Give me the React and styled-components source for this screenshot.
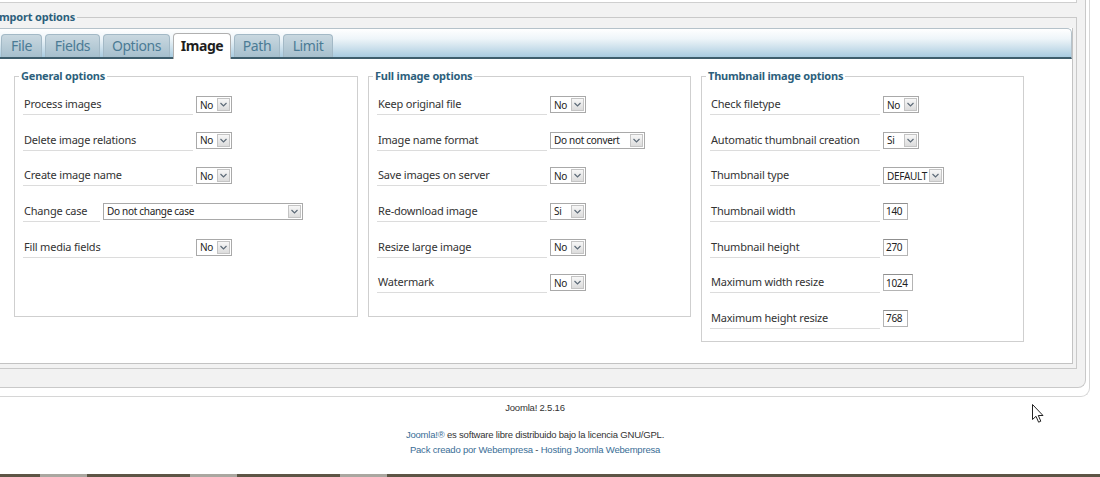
import styled, { createGlobalStyle } from "styled-components";

const GlobalStyle = createGlobalStyle`
  html, body {
    margin: 0;
    padding: 0;
    background: #fff;
    overflow: hidden;
  }
  #root {
    position: relative;
    min-height: 100vh;
    display: flex;
    flex-direction: column;
    font-family: "Noto Sans", "DejaVu Sans", sans-serif;
  }
`

const OuterBox = styled.div`
  box-sizing: border-box;
  width: 1130px;
  margin-left: -40px;
  background: #fff;
  border: 1px solid #d6d6d6;
  border-top: none;
  border-radius: 0 0 9px 0;
  padding: 0 3px 8px 0;
`

const GrayBox = styled.div`
  background: #f2f2f2;
  border: 1px solid #c9c9c9;
  border-top: none;
  border-radius: 0 0 8px 0;
  padding: 0 8px 18px 18px;
`

const TopStrip = styled.div`
  height: 2px;
  background: #fff;
  border: 1px solid #cfcfcf;
  border-top: none;
`

const ImportFieldset = styled.fieldset`
  margin: 7px 0 0;
  padding: 4px 3px 4px 16px;
  border: 1px solid #c9c9c9;
  min-width: 0;
`

const ImportLegend = styled.legend`
  margin-left: -4px;
  padding: 0 2px;
  font-size: 11px;
  font-weight: bold;
  line-height: 14px;
  letter-spacing: -0.2px;
  color: #2d5f7c;
`

const Panel = styled.div`
  background: #fff;
  border: 1px solid #c3c3c3;
  border-top: none;
`

const TabBar = styled.div`
  box-sizing: border-box;
  height: 31px;
  display: flex;
  align-items: flex-end;
  gap: 3px;
  padding-left: 2px;
  border: 1px solid #b5c2ca;
  border-bottom: 2px solid #3e5d6c;
  border-radius: 0 5px 0 0;
  background: linear-gradient(to bottom, #ffffff 0%, #eef5f9 35%, #cfe2ed 65%, #a8cbe0 100%);
`

const Tab = styled.div`
  box-sizing: border-box;
  width: ${p => p.$width}px;
  height: ${p => (p.$active ? "26px" : "23px")};
  margin-bottom: ${p => (p.$active ? "-2px" : "0")};
  line-height: ${p => (p.$active ? "24px" : "22px")};
  text-align: center;
  font-size: 14px;
  letter-spacing: -0.4px;
  font-weight: ${p => (p.$active ? "bold" : "normal")};
  color: ${p => (p.$active ? "#1e1e1e" : "#4b7b95")};
  background: ${p => (p.$active ? "#fff" : "linear-gradient(to bottom, #c9d8e0, #a6bfcd)")};
  border: 1px solid ${p => (p.$active ? "#b0b0b0" : "#a3b9c6")};
  border-bottom: none;
  border-radius: 4px 4px 0 0;
  position: relative;
`

const Body = styled.div`
  display: flex;
  align-items: flex-start;
  gap: 10px;
  padding: 10px 0 21px 16px;
`

const Group = styled.fieldset`
  box-sizing: border-box;
  width: ${p => p.$width}px;
  min-height: ${p => p.$minHeight || 0}px;
  margin: 0;
  padding: 11px 6px 12px 4px;
  border: 1px solid #cfcfcf;
  min-inline-size: 0;
`

const GroupLegend = styled.legend`
  padding: 0 2px;
  font-size: 11px;
  font-weight: bold;
  line-height: 14px;
  letter-spacing: -0.2px;
  color: #2d5f7c;
`

const Rows = styled.div`
  display: flex;
  flex-direction: column;
  gap: 14.67px;
  padding-left: 4px;
`

const Row = styled.div`
  display: flex;
  align-items: center;
  gap: ${p => p.$gap || 3}px;
  height: 21px;
`

const Label = styled.div`
  box-sizing: border-box;
  width: ${p => p.$width || 170}px;
  height: 21px;
  line-height: 20px;
  padding-left: 1px;
  border-bottom: 1px solid #dcdcdc;
  font-size: 11px;
  letter-spacing: -0.2px;
  color: #333;
  white-space: nowrap;
`

const SelectBox = styled.div`
  box-sizing: border-box;
  width: ${p => p.$width}px;
  height: 17px;
  display: flex;
  align-items: center;
  justify-content: space-between;
  padding: 0 1px 0 3px;
  background: #fff;
  border: 1px solid #a9a9a9;
  font-size: 10px;
  letter-spacing: -0.3px;
  color: #222;
  white-space: nowrap;
`

const Arrow = styled.span`
  box-sizing: border-box;
  flex-shrink: 0;
  width: 13px;
  height: 13px;
  display: flex;
  align-items: center;
  justify-content: center;
  border: 1px solid #c4c4c4;
  background: linear-gradient(to bottom, #f7f7f7, #dcdcdc);
`

const TextInput = styled.input`
  box-sizing: border-box;
  width: ${p => p.$width}px;
  height: 17px;
  margin: 0;
  padding: 0 2px;
  border: 1px solid #b4b4b4;
  border-top-color: #8f8f8f;
  font-family: "Noto Sans", "DejaVu Sans", sans-serif;
  font-size: 10px;
  letter-spacing: -0.3px;
  color: #222;
  outline: none;
`

const Footer = styled.div`
  width: 1150px;
  margin-left: -40px;
  text-align: center;
  font-family: "Liberation Sans", Arial, sans-serif;
  font-size: 9.5px;
  letter-spacing: -0.2px;
  color: #333;
`

const Version = styled.p`
  margin: 4px 0 0;
  line-height: 14px;
`

const Credits = styled.p`
  margin: 12px 0 0;
  line-height: 15px;
`

const FooterLink = styled.a`
  color: #3a6e96;
  text-decoration: none;
`

const Taskbar = styled.div`
  margin-top: auto;
  height: 3px;
  display: flex;
  gap: 103px;
  padding-left: 40px;
  background: #5d5545;
`

const TaskSegment = styled.span`
  width: 47px;
  background: #aaa7a0;
`

const Pointer = styled.svg`
  position: absolute;
  left: 1032px;
  top: 404px;
`

const Chevron = () => (
  <svg width="9" height="7" viewBox="0 0 9 7">
    <polyline points="1.5,2 4.5,5 7.5,2" fill="none" stroke="#5d6b78" strokeWidth="1.2" />
  </svg>
)

const Select = ({ value, width = 36 }) => (
  <SelectBox $width={width}>
    <span>{value}</span>
    <Arrow><Chevron /></Arrow>
  </SelectBox>
)

const tabs = [
  { name: "File", width: 41 },
  { name: "Fields", width: 55 },
  { name: "Options", width: 67 },
  { name: "Image", width: 58 },
  { name: "Path", width: 46 },
  { name: "Limit", width: 50 },
]

const general = [
  { label: "Process images", select: "No" },
  { label: "Delete image relations", select: "No" },
  { label: "Create image name", select: "No" },
  { label: "Change case", select: "Do not change case", width: 200, labelWidth: 77, gap: 3 },
  { label: "Fill media fields", select: "No" },
]

const full = [
  { label: "Keep original file", select: "No" },
  { label: "Image name format", select: "Do not convert", width: 95 },
  { label: "Save images on server", select: "No" },
  { label: "Re-download image", select: "Si" },
  { label: "Resize large image", select: "No" },
  { label: "Watermark", select: "No" },
]

const thumbs = [
  { label: "Check filetype", select: "No" },
  { label: "Automatic thumbnail creation", select: "Si" },
  { label: "Thumbnail type", select: "DEFAULT", width: 61 },
  { label: "Thumbnail width", input: "140", width: 25 },
  { label: "Thumbnail height", input: "270", width: 25 },
  { label: "Maximum width resize", input: "1024", width: 30 },
  { label: "Maximum height resize", input: "768", width: 25 },
]

const OptionGroup = ({ title, items, width, minHeight }) => (
  <Group $width={width} $minHeight={minHeight}>
    <GroupLegend>{title}</GroupLegend>
    <Rows>
      {items.map(item => (
        <Row key={item.label} $gap={item.gap}>
          <Label $width={item.labelWidth}>{item.label}</Label>
          {item.input
            ? <TextInput $width={item.width} defaultValue={item.input} />
            : <Select value={item.select} width={item.width} />}
        </Row>
      ))}
    </Rows>
  </Group>
)

const App = () => {
  return (
    <>
      <GlobalStyle />
      <OuterBox>
        <GrayBox>
          <TopStrip />
          <ImportFieldset>
            <ImportLegend>Import options</ImportLegend>
            <Panel>
              <TabBar>
                {tabs.map(t => (
                  <Tab key={t.name} $width={t.width} $active={t.name === "Image"}>{t.name}</Tab>
                ))}
              </TabBar>
              <Body>
                <OptionGroup title="General options" items={general} width={344} minHeight={248} />
                <OptionGroup title="Full image options" items={full} width={323} minHeight={248} />
                <OptionGroup title="Thumbnail image options" items={thumbs} width={323} />
              </Body>
            </Panel>
          </ImportFieldset>
        </GrayBox>
      </OuterBox>
      <Footer>
        <Version>Joomla! 2.5.16</Version>
        <Credits>
          <FooterLink href="#">Joomla!®</FooterLink> es software libre distribuido bajo la licencia GNU/GPL.
          <br />
          <FooterLink href="#">Pack creado por Webempresa</FooterLink> - <FooterLink href="#">Hosting Joomla Webempresa</FooterLink>
        </Credits>
      </Footer>
      <Taskbar>
        <TaskSegment />
        <TaskSegment />
        <TaskSegment />
      </Taskbar>
      <Pointer width="12" height="19" viewBox="0 0 12 19">
        <path d="M0.5 0.5 L0.5 15.5 L4 12.3 L6.6 18.2 L8.8 17.2 L6.3 11.5 L11 11.5 Z" fill="#fff" stroke="#222" strokeWidth="1" strokeLinejoin="round" />
      </Pointer>
    </>
  )
}

export default App
